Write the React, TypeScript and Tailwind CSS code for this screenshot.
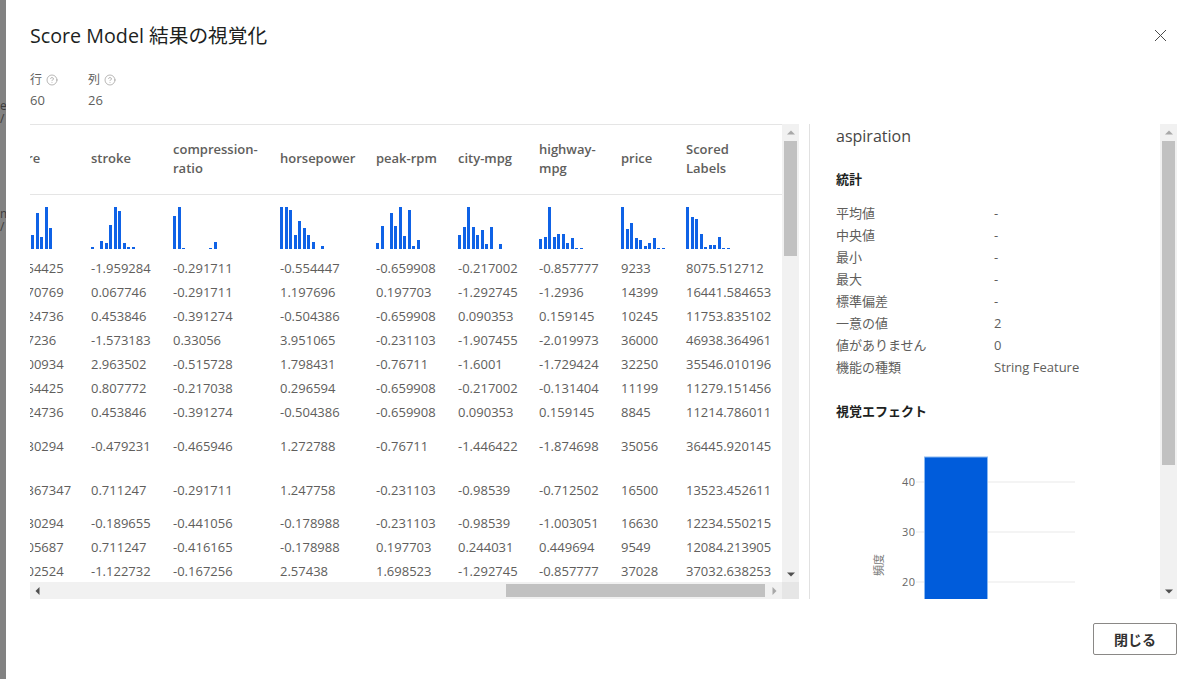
import React from "react";
import { CircleHelp } from "lucide-react";

const GRID = "grid grid-cols-[87px_82px_107px_96px_82px_81px_82px_65px_97px]";

const headers: string[] = ["bore", "stroke", "compression-ratio", "horsepower", "peak-rpm", "city-mpg", "highway-mpg", "price", "Scored Labels"];

const hists: number[][] = [
  [0, 0, 0, 0, 0, 21, 14, 36, 12, 42, 21],
  [2, 0, 8, 6, 24, 42, 38, 6, 2, 2],
  [33, 42, 1, 0, 0, 0, 0, 0, 1, 7],
  [42, 42, 39, 14, 28, 21, 14, 7, 0, 3],
  [6, 23, 0, 36, 23, 42, 13, 39, 3, 9],
  [14, 22, 42, 22, 14, 19, 5, 22, 0, 5],
  [10, 12, 42, 12, 15, 15, 6, 11, 1, 1],
  [42, 20, 26, 11, 9, 3, 6, 11, 1, 1],
  [42, 32, 30, 15, 2, 4, 4, 12, 1, 1],
];

const rows: { h: string; v: string[] }[] = [
  { h: "h-[24px]", v: ["-0.554425", "-1.959284", "-0.291711", "-0.554447", "-0.659908", "-0.217002", "-0.857777", "9233", "8075.512712"] },
  { h: "h-[24px]", v: ["-0.270769", "0.067746", "-0.291711", "1.197696", "0.197703", "-1.292745", "-1.2936", "14399", "16441.584653"] },
  { h: "h-[24px]", v: ["-0.524736", "0.453846", "-0.391274", "-0.504386", "-0.659908", "0.090353", "0.159145", "10245", "11753.835102"] },
  { h: "h-[24px]", v: ["-1.17236", "-1.573183", "0.33056", "3.951065", "-0.231103", "-1.907455", "-2.019973", "36000", "46938.364961"] },
  { h: "h-[24px]", v: ["-0.100934", "2.963502", "-0.515728", "1.798431", "-0.76711", "-1.6001", "-1.729424", "32250", "35546.010196"] },
  { h: "h-[24px]", v: ["-0.554425", "0.807772", "-0.217038", "0.296594", "-0.659908", "-0.217002", "-0.131404", "11199", "11279.151456"] },
  { h: "h-[24px]", v: ["-0.524736", "0.453846", "-0.391274", "-0.504386", "-0.659908", "0.090353", "0.159145", "8845", "11214.786011"] },
  { h: "h-[44px]", v: ["-0.830294", "-0.479231", "-0.465946", "1.272788", "-0.76711", "-1.446422", "-1.874698", "35056", "36445.920145"] },
  { h: "h-[43px]", v: ["-0.1367347", "0.711247", "-0.291711", "1.247758", "-0.231103", "-0.98539", "-0.712502", "16500", "13523.452611"] },
  { h: "h-[24px]", v: ["-0.830294", "-0.189655", "-0.441056", "-0.178988", "-0.231103", "-0.98539", "-1.003051", "16630", "12234.550215"] },
  { h: "h-[24px]", v: ["-0.305687", "0.711247", "-0.416165", "-0.178988", "0.197703", "0.244031", "0.449694", "9549", "12084.213905"] },
  { h: "h-[24px]", v: ["-0.502524", "-1.122732", "-0.167256", "2.57438", "1.698523", "-1.292745", "-0.857777", "37028", "37032.638253"] },
];

const stats: [string, string][] = [
  ["平均値", "-"],
  ["中央値", "-"],
  ["最小", "-"],
  ["最大", "-"],
  ["標準偏差", "-"],
  ["一意の値", "2"],
  ["値がありません", "0"],
  ["機能の種類", "String Feature"],
];

function Arrow({ dir, dark }: { dir: "up" | "down" | "left" | "right"; dark?: boolean }) {
  const pts = {
    up: "4,1.5 8,5.5 0,5.5",
    down: "0,2.5 8,2.5 4,6.5",
    left: "5.5,0 5.5,8 1.5,4",
    right: "2.5,0 6.5,4 2.5,8",
  }[dir];
  return (
    <svg width="8" height="8" viewBox="0 0 8 8" className="block">
      <polygon points={pts} fill={dark ? "#505050" : "#a8a8a8"} />
    </svg>
  );
}

function VScroll({ thumb }: { thumb: string }) {
  return (
    <div className="flex w-[17px] shrink-0 flex-col bg-[#f1f1f1]">
      <div className="flex h-[17px] shrink-0 items-center justify-center">
        <Arrow dir="up" />
      </div>
      <div className="flex-1 px-[2px]">
        <div className={`${thumb} bg-[#c1c1c1]`} />
      </div>
      <div className="flex h-[17px] shrink-0 items-center justify-center">
        <Arrow dir="down" dark />
      </div>
    </div>
  );
}

function Hist({ bars }: { bars: number[] }) {
  return (
    <div className="flex h-[42px] items-end gap-[1.5px]">
      {bars.map((b, i) => (
        <div key={i} className="w-[3px] shrink-0 bg-[#0f62e6]" style={{ height: b }} />
      ))}
    </div>
  );
}

function Chart() {
  const lines = [52, 102, 152];
  const labels = ["40", "30", "20"];
  return (
    <svg width="324" height="169" viewBox="0 0 324 169" className="block">
      {lines.map((y, i) => (
        <g key={y}>
          <line x1="80" x2="239" y1={y} y2={y} stroke="#f1f1f1" strokeWidth="1.3" />
          <text x="79.5" y={y + 4} textAnchor="end" fontSize="11" fill="#666" letterSpacing="0.4">
            {labels[i]}
          </text>
        </g>
      ))}
      <rect x="88.5" y="27" width="63" height="150" fill="#005cdb" stroke="#8ab8f0" strokeWidth="1" />
      <text x="0" y="0" fontSize="11" fill="#777" textAnchor="middle" transform="translate(47,135) rotate(-90)">
        頻度
      </text>
    </svg>
  );
}

export default function App() {
  return (
    <div
      className="flex h-[679px] w-[1200px] overflow-hidden bg-white text-[13px] text-[#605e5c]"
      style={{ fontFamily: '"Open Sans", "Noto Sans CJK JP", sans-serif' }}
    >
      <div className="flex w-[6px] shrink-0 flex-col items-start overflow-hidden bg-[#828282] pt-[99px] text-[12px] leading-[13px] text-[#3c3c3c]">
        <div className="whitespace-nowrap">e.</div>
        <div className="whitespace-nowrap">/</div>
        <div className="mt-[82px] whitespace-nowrap">m</div>
        <div className="whitespace-nowrap">/</div>
      </div>

      <div className="flex flex-1 flex-col pl-[24px] pr-[23px]">
        <div className="flex h-[70px] shrink-0 items-center justify-between pt-[1px]">
          <div className="text-[19.7px] font-normal text-[#201f1e]">Score Model 結果の視覚化</div>
          <svg width="13" height="13" viewBox="0 0 13 13" className="mr-[10px]">
            <path d="M1 1 L12 12 M12 1 L1 12" stroke="#4a4a4a" strokeWidth="1" fill="none" />
          </svg>
        </div>

        <div className="flex h-[54px] shrink-0 gap-[28px]">
          {[
            ["行", "60"],
            ["列", "26"],
          ].map(([l, v]) => (
            <div key={l} className="w-[30px] pt-[1px]">
              <div className="flex h-[18px] items-center gap-[4px] text-[12px]">
                <span>{l}</span>
                <CircleHelp size={12} strokeWidth={1.2} color="#8a8886" />
              </div>
              <div className="leading-[22px]">{v}</div>
            </div>
          ))}
        </div>

        <div className="flex h-[475px] shrink-0">
          <div className="flex w-[769px] shrink-0 flex-col">
            <div className="flex h-[458px] shrink-0">
              <div className="w-[752px] shrink-0 overflow-hidden border-t border-[#e5e5e5]">
                <div className="ml-[-26px] w-[778px]">
                  <div className={`${GRID} h-[70px] items-center border-b border-[#e5e5e5] pb-[2px] font-semibold leading-[19px]`}>
                    {headers.map((h, i) => (
                      <div key={h} className={i === 0 ? "pl-[7px]" : i === 2 ? "w-[90px]" : i === 8 ? "w-[60px]" : i === 6 ? "w-[66px]" : ""}>
                        {h}
                      </div>
                    ))}
                  </div>
                  <div className={`${GRID} h-[62px] items-end pb-[8px]`}>
                    {hists.map((b, i) => (
                      <Hist key={i} bars={b} />
                    ))}
                  </div>
                  {rows.map((r, i) => (
                    <div key={i} className={`${GRID} ${r.h} items-center whitespace-nowrap`}>
                      {r.v.map((c, j) => (
                        <div key={j}>{c}</div>
                      ))}
                    </div>
                  ))}
                </div>
              </div>
              <VScroll thumb="h-[115px]" />
            </div>
            <div className="flex h-[17px] shrink-0">
              <div className="flex w-[752px] shrink-0 items-center bg-[#f1f1f1]">
                <div className="flex w-[16px] shrink-0 justify-center">
                  <Arrow dir="left" dark />
                </div>
                <div className="ml-[460px] h-[13px] w-[259px] shrink-0 bg-[#c1c1c1]" />
                <div className="flex flex-1 justify-center">
                  <Arrow dir="right" />
                </div>
              </div>
              <div className="w-[17px] bg-[#e6e6e6]" />
            </div>
          </div>

          <div className="ml-[10px] flex flex-1 border-l border-[#e1e1e1]">
            <div className="flex-1 overflow-hidden pl-[26px]">
              <div className="mt-[1px] text-[16px] leading-[22px] text-[#484644]">aspiration</div>
              <div className="mt-[22px] font-semibold leading-[20px] text-[#201f1e]">統計</div>
              <div className="mt-[14px]">
                {stats.map(([k, v]) => (
                  <div key={k} className="flex h-[22px] items-center">
                    <div className="w-[158px] shrink-0">{k}</div>
                    <div>{v}</div>
                  </div>
                ))}
              </div>
              <div className="mt-[22px] font-semibold leading-[20px] text-[#201f1e]">視覚エフェクト</div>
              <div className="mt-[9px]">
                <Chart />
              </div>
            </div>
            <VScroll thumb="h-[324px]" />
          </div>
        </div>

        <div className="flex flex-1 items-start justify-end pt-[24px]">
          <button className="h-[32px] w-[84px] rounded-[2px] border border-[#8a8886] bg-white text-[14px] font-semibold text-[#323130]">
            閉じる
          </button>
        </div>
      </div>
    </div>
  );
}
